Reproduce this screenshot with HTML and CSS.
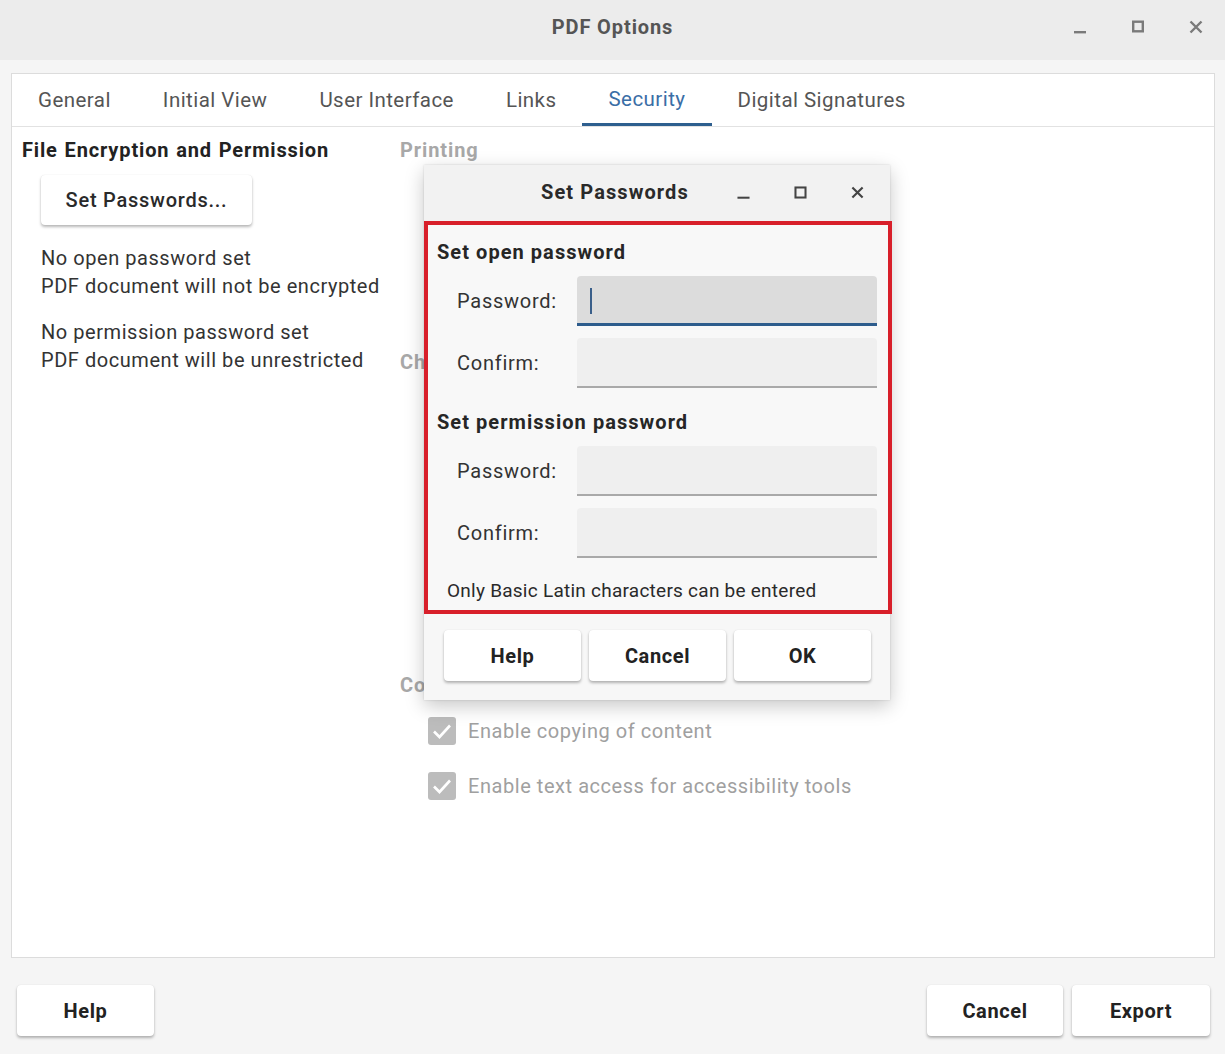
FILE: index.html
```html
<!DOCTYPE html>
<html>
<head>
<meta charset="utf-8">
<title>PDF Options</title>
<link rel="stylesheet" href="styles.css">
</head>
<body>
<div class="titlebar">
  <div></div>
  <div class="title">PDF Options</div>
  <div class="wincontrols">
    <svg class="wc" viewBox="0 0 14 14"><rect x="1" y="11" width="12" height="2.4" fill="#7a7a7a"/></svg>
    <svg class="wc" viewBox="0 0 14 14"><rect x="2.2" y="1.7" width="9.6" height="9.6" fill="none" stroke="#7a7a7a" stroke-width="2.4"/></svg>
    <svg class="wc" viewBox="0 0 14 14"><path d="M1.5 1.5 L12.5 12.5 M12.5 1.5 L1.5 12.5" stroke="#7a7a7a" stroke-width="2.4"/></svg>
  </div>
</div>

<div class="frame">
  <div class="tabs">
    <div class="tab">General</div>
    <div class="tab">Initial View</div>
    <div class="tab">User Interface</div>
    <div class="tab">Links</div>
    <div class="tab active">Security</div>
    <div class="tab">Digital Signatures</div>
  </div>
  <div class="content">
    <div class="leftcol">
      <div class="heading">File Encryption and Permission</div>
      <button class="btn setpw">Set Passwords...</button>
      <div class="info first">No open password set<br>PDF document will not be encrypted</div>
      <div class="info">No permission password set<br>PDF document will be unrestricted</div>
    </div>
    <div class="rightcol">
      <div class="heading dim">Printing</div>
      <div class="heading dim changes">Ch</div>
      <div class="heading dim contents">Co</div>
      <div class="check">
        <span class="box"><svg viewBox="0 0 28 28"><path d="M6 14.5 L11.5 20 L22 8.5" fill="none" stroke="#fff" stroke-width="2.6"/></svg></span>
        <span class="clabel">Enable copying of content</span>
      </div>
      <div class="check second">
        <span class="box"><svg viewBox="0 0 28 28"><path d="M6 14.5 L11.5 20 L22 8.5" fill="none" stroke="#fff" stroke-width="2.6"/></svg></span>
        <span class="clabel">Enable text access for accessibility tools</span>
      </div>
    </div>
  </div>
</div>

<div class="footer">
  <button class="btn fbtn help">Help</button>
  <div class="spacer"></div>
  <button class="btn fbtn">Cancel</button>
  <button class="btn fbtn export">Export</button>
</div>

<div class="dialog">
  <div class="dtitlebar">
    <div class="dtitle">Set Passwords</div>
    <div class="dcontrols">
      <svg class="dc" viewBox="0 0 14 14"><rect x="0.5" y="11.5" width="13" height="2.2" fill="#444"/></svg>
      <svg class="dc" viewBox="0 0 14 14"><rect x="1.6" y="1.6" width="10.8" height="10.8" fill="none" stroke="#444" stroke-width="2.2"/></svg>
      <svg class="dc" viewBox="0 0 14 14"><path d="M1.5 1.5 L12.5 12.5 M12.5 1.5 L1.5 12.5" stroke="#444" stroke-width="2.3"/></svg>
    </div>
  </div>
  <div class="dbody">
    <div class="dheading">Set open password</div>
    <div class="frow">
      <span class="flabel">Password:</span>
      <div class="field focused"><span class="caret"></span></div>
    </div>
    <div class="frow">
      <span class="flabel">Confirm:</span>
      <div class="field"></div>
    </div>
    <div class="dheading second">Set permission password</div>
    <div class="frow">
      <span class="flabel">Password:</span>
      <div class="field"></div>
    </div>
    <div class="frow">
      <span class="flabel">Confirm:</span>
      <div class="field"></div>
    </div>
    <div class="note">Only Basic Latin characters can be entered</div>
  </div>
  <div class="dbuttons">
    <button class="btn dbtn">Help</button>
    <button class="btn dbtn">Cancel</button>
    <button class="btn dbtn">OK</button>
  </div>
</div>
</body>
</html>
```

FILE: styles.css
```css
* { box-sizing: border-box; }
html, body { margin: 0; padding: 0; }
body {
  width: 1225px;
  height: 1054px;
  background: #f5f5f5;
  font-family: Roboto, "Liberation Sans", sans-serif;
  color: #333;
  overflow: hidden;
  position: relative;
}

.titlebar {
  height: 60px;
  background: #ececec;
  display: grid;
  grid-template-columns: 1fr auto 1fr;
  align-items: center;
}
.title {
  font-size: 20px;
  font-weight: 700;
  color: #555;
  margin-top: -6px;
  letter-spacing: 0.9px;
}
.wincontrols {
  display: flex;
  justify-content: flex-end;
  gap: 44px;
  padding-right: 22px;
  margin-top: -6px;
}
.wc { width: 14px; height: 14px; display: block; }

.frame {
  margin: 13px 10px 0 11px;
  height: 885px;
  background: #fff;
  border: 1px solid #dcdcdc;
}
.tabs {
  height: 53px;
  display: flex;
  border-bottom: 1px solid #e2e2e2;
}
.tab {
  padding: 0 26px;
  line-height: 52px;
  font-size: 20.5px;
  color: #555;
  letter-spacing: 0.45px;
}
.tab.active {
  color: #3a6ea6;
  border-bottom: 3px solid #2e5f8f;
  line-height: 50px;
}

.content {
  display: flex;
  padding: 10px 0 0 10px;
}
.leftcol { width: 378px; }
.heading {
  font-size: 20px;
  font-weight: 700;
  color: #222;
  line-height: 26px;
  letter-spacing: 0.85px;
  word-spacing: 1px;
}
.heading.dim { color: #a8a8a8; letter-spacing: 0.9px; }
.btn {
  background: #fff;
  border: none;
  border-radius: 4px;
  box-shadow: 0 2px 3px rgba(0,0,0,0.28), 0 0 1px rgba(0,0,0,0.12);
  font-family: Roboto, "Liberation Sans", sans-serif;
  font-size: 20px;
  font-weight: 700;
  color: #222;
  padding: 0;
  display: flex;
  align-items: center;
  justify-content: center;
  letter-spacing: 0.6px;
}
.setpw {
  margin: 12px 0 0 19px;
  width: 211px;
  height: 50px;
  font-weight: 500;
  color: #2a2a2a;
  letter-spacing: 0.75px;
}
.info {
  margin: 20px 0 0 19px;
  font-size: 20px;
  line-height: 27.5px;
  color: #333;
  letter-spacing: 0.55px;
}
.info.first { margin-top: 20px; }
.info + .info { margin-top: 19px; }

.rightcol { padding-left: 0; }
.changes { margin-top: 186px; }
.contents { margin-top: 297px; }
.check {
  display: flex;
  align-items: center;
  margin: 19px 0 0 28px;
}
.check.second { margin-top: 27px; }
.box {
  width: 28px;
  height: 28px;
  border-radius: 3px;
  background: #bcbcbc;
  display: block;
}
.box svg { width: 28px; height: 28px; display: block; }
.clabel {
  margin-left: 12px;
  font-size: 20px;
  color: #a0a0a0;
  letter-spacing: 0.55px;
}

.footer {
  display: flex;
  padding: 27px 15px 0 17px;
  gap: 9px;
}
.spacer { flex: 1; }
.fbtn { width: 136px; height: 51px; }
.help { width: 137px; }
.export { width: 138px; }

/* dialog window over the main window */
.dialog {
  position: absolute;
  left: 424px;
  top: 165px;
  width: 466px;
  height: 535px;
  background: #f7f7f7;
  box-shadow: 0 6px 18px rgba(0,0,0,0.22), 0 0 2px rgba(0,0,0,0.15);
}
.dtitlebar {
  height: 56px;
  background: #f2f2f2;
  position: relative;
  display: flex;
  align-items: center;
  padding-left: 117px;
}
.dtitle {
  font-size: 20px;
  font-weight: 700;
  color: #2a2a2a;
  margin-top: -2px;
  letter-spacing: 1.1px;
}
.dcontrols {
  position: absolute;
  right: 26px;
  top: 21px;
  display: flex;
  gap: 44px;
}
.dc { width: 13px; height: 13px; display: block; }
.dbody {
  border: 4px solid #d81f2a;
  margin-right: -2px;
  padding: 14px 11px 6px 9px;
  background: #f8f8f8;
}
.dheading {
  font-size: 20px;
  font-weight: 700;
  color: #262626;
  line-height: 26px;
  letter-spacing: 1.05px;
}
.dheading.second { margin-top: 21px; }
.frow {
  display: flex;
  align-items: center;
  margin-top: 11px;
}
.dheading + .frow { margin-top: 11px; }
.frow + .frow { margin-top: 12px; }
.flabel {
  width: 140px;
  padding-left: 20px;
  font-size: 20px;
  color: #333;
  letter-spacing: 0.75px;
}
.field {
  flex: 1;
  height: 50px;
  background: #efefef;
  border-bottom: 2px solid #a9a9a9;
  border-radius: 4px 4px 0 0;
  position: relative;
}
.field.focused {
  background: #dcdcdc;
  border-bottom: 3px solid #2d5c8c;
}
.caret {
  position: absolute;
  left: 13px;
  top: 12px;
  width: 2px;
  height: 26px;
  background: #3a5f8a;
}
.note {
  margin-top: 20px;
  padding-left: 10px;
  font-size: 19px;
  line-height: 26px;
  color: #2a2a2a;
  letter-spacing: 0.25px;
}
.dbuttons {
  display: flex;
  gap: 8px;
  padding: 16px 0 0 20px;
}
.dbtn { width: 137px; height: 51px; }
```
